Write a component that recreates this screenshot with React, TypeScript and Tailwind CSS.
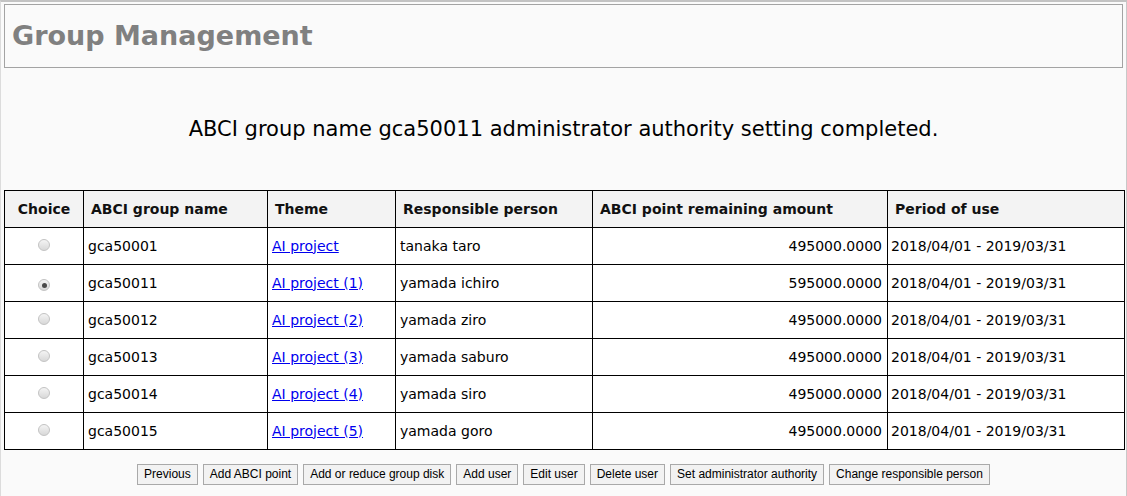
import React, { FC } from "react";

type Group = {
  name: string;
  theme: string;
  person: string;
  points: string;
  period: string;
  checked?: boolean;
};

const groups: Group[] = [
  { name: "gca50001", theme: "AI project", person: "tanaka taro", points: "495000.0000", period: "2018/04/01 - 2019/03/31" },
  { name: "gca50011", theme: "AI project (1)", person: "yamada ichiro", points: "595000.0000", period: "2018/04/01 - 2019/03/31", checked: true },
  { name: "gca50012", theme: "AI project (2)", person: "yamada ziro", points: "495000.0000", period: "2018/04/01 - 2019/03/31" },
  { name: "gca50013", theme: "AI project (3)", person: "yamada saburo", points: "495000.0000", period: "2018/04/01 - 2019/03/31" },
  { name: "gca50014", theme: "AI project (4)", person: "yamada siro", points: "495000.0000", period: "2018/04/01 - 2019/03/31" },
  { name: "gca50015", theme: "AI project (5)", person: "yamada goro", points: "495000.0000", period: "2018/04/01 - 2019/03/31" },
];

const buttons = [
  "Previous",
  "Add ABCI point",
  "Add or reduce group disk",
  "Add user",
  "Edit user",
  "Delete user",
  "Set administrator authority",
  "Change responsible person",
];

// fake radio, the native one renders differently in headless chrome
const Radio: FC<{ checked?: boolean }> = ({ checked }) => (
  <span className="inline-flex h-[12px] w-[12px] items-center justify-center rounded-full border border-[#c4c4c4] bg-gradient-to-b from-[#f4f4f4] to-[#d8d8d8]">
    {checked && <span className="h-[5px] w-[5px] rounded-full bg-[#4a4a4a]" />}
  </span>
);

const App: FC = () => {
  return (
    <div className="h-[496px] w-[1127px] overflow-hidden border-t-2 border-l border-r border-t-[#c3c3c3] border-l-[#dcdcdc] border-r-[#c8c8c8] bg-[#fafafa] font-['DejaVu_Sans',Verdana,sans-serif] text-black">
      <div className="mx-[3px] mt-[2px] h-[64px] border border-[#a3a3a3] pl-[7px] pt-[13px]">
        <h1 className="text-[27px] leading-[36px] font-bold text-[#808080]">Group Management</h1>
      </div>

      <p className="mt-[48px] text-center text-[21px] leading-[26px]">
        ABCI group name gca50011 administrator authority setting completed.
      </p>

      <table className="mt-[48px] ml-[3px] w-[1120px] table-fixed border-collapse text-[14px]">
        <colgroup>
          <col className="w-[79px]" />
          <col className="w-[184px]" />
          <col className="w-[128px]" />
          <col className="w-[197px]" />
          <col className="w-[295px]" />
          <col className="w-[237px]" />
        </colgroup>
        <thead>
          <tr className="h-[37px] bg-[#f3f3f3] font-bold text-[#111]">
            <th className="border border-black text-center">Choice</th>
            <th className="border border-black pl-[7px] text-left">ABCI group name</th>
            <th className="border border-black pl-[7px] text-left">Theme</th>
            <th className="border border-black pl-[7px] text-left">Responsible person</th>
            <th className="border border-black pl-[7px] text-left">ABCI point remaining amount</th>
            <th className="border border-black pl-[7px] text-left">Period of use</th>
          </tr>
        </thead>
        <tbody>
          {groups.map((g) => (
            <tr key={g.name} className="h-[37px] bg-white">
              <td className="border border-black text-center align-middle">
                <Radio checked={g.checked} />
              </td>
              <td className="border border-black pl-[4px]">{g.name}</td>
              <td className="border border-black pl-[4px]">
                <a href="#" className="text-[#0000ee] underline">{g.theme}</a>
              </td>
              <td className="border border-black pl-[4px]">{g.person}</td>
              <td className="border border-black pr-[5px] text-right">{g.points}</td>
              <td className="border border-black pl-[3px] whitespace-nowrap">{g.period}</td>
            </tr>
          ))}
        </tbody>
      </table>

      <div className="mt-[14px] flex justify-center gap-[5px] font-['Liberation_Sans',Arial,sans-serif] text-[12px]">
        {buttons.map((b) => (
          <button
            key={b}
            className="h-[21px] border border-[#a9a9a9] bg-[#f2f2f2] px-[6px] leading-[19px] text-black"
          >
            {b}
          </button>
        ))}
      </div>
    </div>
  );
};

export default App;
